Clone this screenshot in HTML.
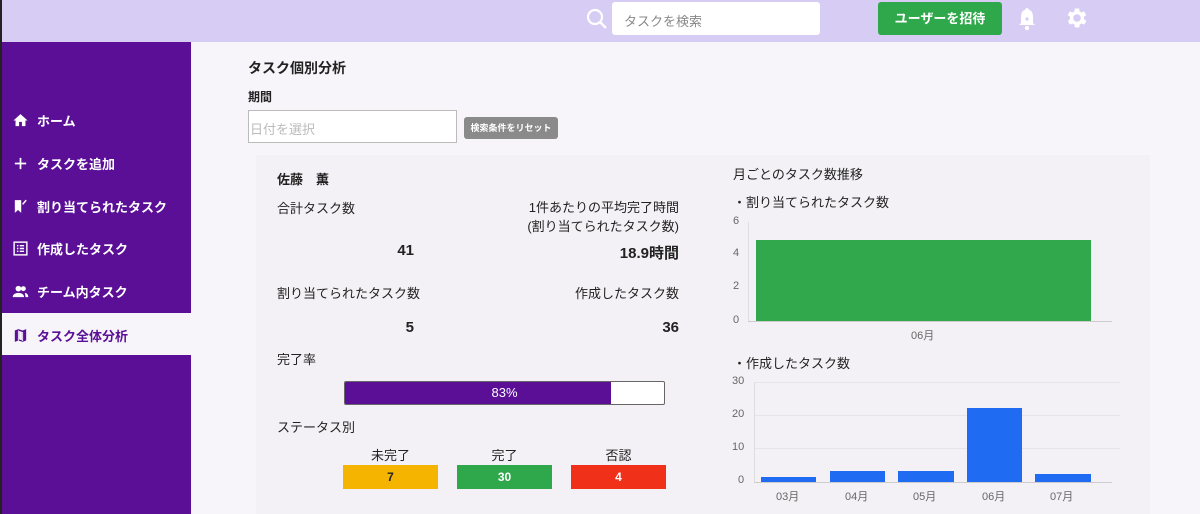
<!DOCTYPE html>
<html><head><meta charset="utf-8"><style>
*{margin:0;padding:0;box-sizing:border-box}
body{width:1200px;height:514px;overflow:hidden;background:#f7f5fa;font-family:"Liberation Sans","Noto Sans CJK JP",sans-serif;color:#222;position:relative}
.a{position:absolute;white-space:nowrap}
.hdr{left:0;top:0;width:1200px;height:42px;background:#d6ccf4;border-left:2px solid #222}
.side{left:0;top:42px;width:191px;height:472px;background:#5a0f96;border-left:2px solid #222}
.nav{left:12px;font-size:13px;font-weight:bold;color:#fff;display:flex;align-items:center;gap:8px}
.nav svg{width:17px;height:17px}
.card{left:256px;top:155px;width:894px;height:359px;background:#f3f1f5}
.t13{font-size:13px}
.b{font-weight:bold}
.r{text-align:right}
.yl{font-size:11px;color:#666;font-family:"Liberation Sans",sans-serif}
</style></head><body>
<div class="a hdr"></div>
<svg class="a" style="left:585px;top:7px" width="24" height="24" viewBox="0 0 24 24"><circle cx="10" cy="10" r="7" fill="none" stroke="#fff" stroke-width="2.2"/><path d="M15 15l6 6" stroke="#fff" stroke-width="2.4"/></svg>
<div class="a" style="left:612px;top:2px;width:208px;height:33px;background:#fff;border-radius:3px;font-size:13px;color:#888;padding:9px 0 0 12px">タスクを検索</div>
<div class="a" style="left:878px;top:2px;width:124px;height:33px;background:#2ea84a;border-radius:3px;color:#fff;font-size:13px;font-weight:bold;text-align:center;line-height:33px">ユーザーを招待</div>
<svg class="a" style="left:1016px;top:6px" width="22" height="26" viewBox="0 0 22 26"><path d="M11 2c1 0 1.5.7 1.5 1.5C16 4.5 17 7.5 17 11v6l2 2H3l2-2v-6c0-3.5 1-6.5 4.5-7.5C9.5 2.7 10 2 11 2z" fill="#fff"/><circle cx="11" cy="22" r="2.2" fill="#fff"/><circle cx="11" cy="13" r="1.6" fill="#d6ccf4"/></svg>
<svg class="a" style="left:1064px;top:5px" width="26" height="26" viewBox="0 0 24 24"><path fill="#fff" d="M19.4 13a7.5 7.5 0 000-2l2.1-1.6-2-3.5-2.5 1a7 7 0 00-1.7-1L15 3.2h-4l-.4 2.7a7 7 0 00-1.7 1l-2.5-1-2 3.5L6.6 11a7.5 7.5 0 000 2l-2.1 1.6 2 3.5 2.5-1a7 7 0 001.7 1l.4 2.7h4l.4-2.7a7 7 0 001.7-1l2.5 1 2-3.5zM13 15.5a3.5 3.5 0 110-7 3.5 3.5 0 010 7z" transform="translate(-1 0)"/></svg>

<div class="a side"></div>
<div class="a" style="left:2px;top:313px;width:189px;height:42px;background:#f7f5fa"></div>
<div class="a nav" style="top:111px"><svg viewBox="0 0 24 24"><path fill="#fff" d="M10 20v-6h4v6h5v-8h3L12 3 2 12h3v8z"/></svg>ホーム</div>
<div class="a nav" style="top:154px"><svg viewBox="0 0 24 24"><path d="M12 4v16M4 12h16" stroke="#fff" stroke-width="2.4"/></svg>タスクを追加</div>
<div class="a nav" style="top:197px"><svg viewBox="0 0 24 24"><path fill="#fff" d="M4 3h9v18l-4.5-4L4 21z"/><path d="M15 9l5-6" stroke="#fff" stroke-width="2"/></svg>割り当てられたタスク</div>
<div class="a nav" style="top:239px"><svg viewBox="0 0 24 24"><rect x="3" y="3" width="18" height="18" fill="none" stroke="#fff" stroke-width="2"/><path d="M7 8h2M11 8h6M7 12h2M11 12h6M7 16h2M11 16h6" stroke="#fff" stroke-width="2"/></svg>作成したタスク</div>
<div class="a nav" style="top:282px"><svg viewBox="0 0 24 24"><circle cx="9" cy="8" r="4" fill="#fff"/><path fill="#fff" d="M1 20c0-4 4-6 8-6s8 2 8 6z"/><circle cx="16" cy="8" r="3.5" fill="#fff"/><path fill="#fff" d="M18 14c3 .5 5 2 5 6h-4c0-2.5-.5-4.5-1-6z"/></svg>チーム内タスク</div>
<div class="a nav" style="top:326px;color:#5a0f96"><svg viewBox="0 0 24 24"><path fill="#5a0f96" d="M4 5l5-2 6 2 5-2v16l-5 2-6-2-5 2z"/><path d="M9 5v14M15 7v13" stroke="#f7f5fa" stroke-width="1.3"/><path d="M10 5.5l4 1.3v12l-4-1.3z" fill="#f7f5fa"/></svg>タスク全体分析</div>

<div class="a b" style="left:248px;top:58px;font-size:14px">タスク個別分析</div>
<div class="a b" style="left:248px;top:88px;font-size:12px">期間</div>
<div class="a" style="left:248px;top:110px;width:209px;height:33px;background:#fff;border:1px solid #bbb;font-size:13px;color:#bbb;padding:8px 0 0 1px">日付を選択</div>
<div class="a" style="left:464px;top:117px;width:94px;height:22px;background:#8a8a8a;border-radius:3px;color:#fff;font-size:9px;font-weight:bold;text-align:center;line-height:22px">検索条件をリセット</div>

<div class="a card"></div>
<div class="a b t13" style="left:277px;top:169px">佐藤　薫</div>
<div class="a t13" style="left:277px;top:198px">合計タスク数</div>
<div class="a t13 r" style="right:521px;top:198px;line-height:19px">1件あたりの平均完了時間<br>(割り当てられたタスク数)</div>
<div class="a b" style="right:786px;top:242px;font-size:15px">41</div>
<div class="a b" style="right:521px;top:242px;font-size:15px">18.9時間</div>
<div class="a t13" style="left:277px;top:283px">割り当てられたタスク数</div>
<div class="a t13" style="right:521px;top:283px">作成したタスク数</div>
<div class="a b" style="right:786px;top:319px;font-size:15px">5</div>
<div class="a b" style="right:521px;top:319px;font-size:15px">36</div>
<div class="a t13" style="left:277px;top:349px">完了率</div>
<div class="a" style="left:344px;top:381px;width:321px;height:24px;background:#fff;border:1px solid #666;border-radius:2px;overflow:hidden"><div style="width:266px;height:100%;background:#5a0f96"></div></div>
<div class="a" style="left:344px;top:381px;width:321px;line-height:24px;text-align:center;color:#fff;font-size:13px">83%</div>
<div class="a t13" style="left:277px;top:417px">ステータス別</div>
<div class="a t13" style="left:343px;width:95px;top:445px;text-align:center">未完了</div>
<div class="a t13" style="left:457px;width:95px;top:445px;text-align:center">完了</div>
<div class="a t13" style="left:571px;width:95px;top:445px;text-align:center">否認</div>
<div class="a b" style="left:343px;top:465px;width:95px;height:24px;background:#f5b400;font-size:12px;text-align:center;line-height:24px">7</div>
<div class="a b" style="left:457px;top:465px;width:95px;height:24px;background:#2ea84a;color:#fff;font-size:12px;text-align:center;line-height:24px">30</div>
<div class="a b" style="left:571px;top:465px;width:95px;height:24px;background:#f1301a;color:#fff;font-size:12px;text-align:center;line-height:24px">4</div>

<div class="a t13" style="left:733px;top:164px">月ごとのタスク数推移</div>
<div class="a t13" style="left:733px;top:192px">・割り当てられたタスク数</div>
<div class="a yl" style="left:733px;top:215px">6</div>
<div class="a yl" style="left:733px;top:247px">4</div>
<div class="a yl" style="left:733px;top:280px">2</div>
<div class="a yl" style="left:733px;top:314px">0</div>
<div class="a" style="left:748px;top:222px;width:1px;height:100px;background:#ddd"></div>
<div class="a" style="left:748px;top:321px;width:364px;height:1px;background:#ccc"></div>
<div class="a" style="left:756px;top:240px;width:335px;height:81px;background:#31a84c"></div>
<div class="a yl" style="left:911px;top:327px">06月</div>

<div class="a t13" style="left:733px;top:353px">・作成したタスク数</div>
<div class="a yl" style="left:732px;top:375px">30</div>
<div class="a yl" style="left:732px;top:408px">20</div>
<div class="a yl" style="left:732px;top:441px">10</div>
<div class="a yl" style="left:738px;top:474px">0</div>
<div class="a" style="left:754px;top:382px;width:366px;height:1px;background:#e6e4ea"></div>
<div class="a" style="left:754px;top:415px;width:366px;height:1px;background:#e6e4ea"></div>
<div class="a" style="left:754px;top:448px;width:366px;height:1px;background:#e6e4ea"></div>
<div class="a" style="left:754px;top:382px;width:1px;height:100px;background:#ddd"></div>
<div class="a" style="left:754px;top:482px;width:358px;height:1px;background:#ccc"></div>
<div class="a" style="left:761px;top:477px;width:55px;height:5px;background:#1f6cf2"></div>
<div class="a" style="left:830px;top:471px;width:55px;height:11px;background:#1f6cf2"></div>
<div class="a" style="left:898px;top:471px;width:56px;height:11px;background:#1f6cf2"></div>
<div class="a" style="left:967px;top:408px;width:55px;height:74px;background:#1f6cf2"></div>
<div class="a" style="left:1035px;top:474px;width:56px;height:8px;background:#1f6cf2"></div>
<div class="a yl" style="left:776px;top:488px">03月</div>
<div class="a yl" style="left:845px;top:488px">04月</div>
<div class="a yl" style="left:913px;top:488px">05月</div>
<div class="a yl" style="left:982px;top:488px">06月</div>
<div class="a yl" style="left:1050px;top:488px">07月</div>
</body></html>
